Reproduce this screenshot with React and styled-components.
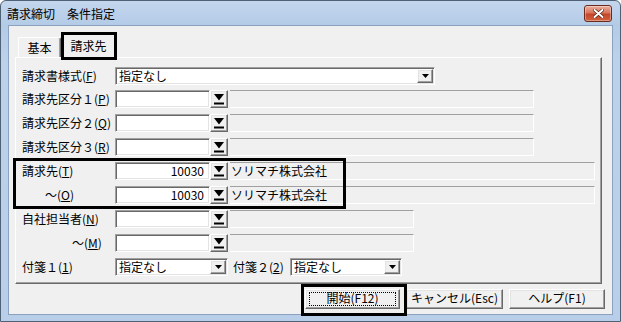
import React from 'react';
import styled, { createGlobalStyle } from 'styled-components';

const Global = createGlobalStyle`
  html, body { margin: 0; padding: 0; background: #fff; }
  body {
    font-family: "Noto Sans CJK JP", "Noto Sans", sans-serif;
    font-size: 12px;
    color: #000;
  }
`;

const Window = styled.div`
  position: relative;
  width: 621px;
  height: 322px;
  box-sizing: border-box;
  border: 1px solid #4f6275;
  border-radius: 6px 6px 0 0;
  background: linear-gradient(to bottom, #c3d6ed 0px, #b4cbe7 24px, #bcd1ea 60px, #b9cfe9 100%);
  display: flex;
  flex-direction: column;
  overflow: hidden;
`;

const TitleBar = styled.div`
  height: 24px;
  flex: none;
  display: flex;
  justify-content: space-between;
  align-items: flex-start;
  padding-left: 6px;
`;

const TitleText = styled.div`
  line-height: 14px;
  margin-top: 6px;
  font-size: 12px;
`;

const CloseBtn = styled.div`
  box-sizing: border-box;
  width: 28px;
  height: 17px;
  margin-top: 4px;
  margin-right: 8px;
  border: 1px solid #6b2a1c;
  border-radius: 3px;
  background: linear-gradient(to bottom, #eab0a0 0%, #d8745c 45%, #c4452a 55%, #d0623f 100%);
  box-shadow: inset 0 0 0 1px rgba(255, 255, 255, 0.35);
  display: flex;
  align-items: center;
  justify-content: center;
`;

const Client = styled.div`
  flex: 1;
  margin: 0 7px 6px 7px;
  box-sizing: border-box;
  border: 1px solid #8ba2bf;
  background: #f0f0f0;
  display: flex;
  flex-direction: column;
`;

const TabStrip = styled.div`
  display: flex;
  align-items: flex-end;
  height: 24px;
  margin-top: 7px;
  padding-left: 9px;
  position: relative;
  z-index: 1;
`;

const Tab = styled.div`
  box-sizing: border-box;
  width: ${p => (p.$active ? 55 : 43)}px;
  height: ${p => (p.$active ? 25 : 20)}px;
  margin-bottom: ${p => (p.$active ? -1 : 0)}px;
  background: #f0f0f0;
  border-top: 1px solid #fff;
  border-left: 1px solid #fff;
  border-right: 1px solid #696969;
  box-shadow: inset -1px 0 0 #a0a0a0;
  border-radius: 2px 2px 0 0;
  display: flex;
  align-items: center;
  justify-content: center;
  line-height: 14px;
  padding-top: ${p => (p.$active ? 0 : 1)}px;
`;

const Panel = styled.div`
  box-sizing: border-box;
  width: 587px;
  height: 227px;
  margin-left: 6px;
  border-top: 1px solid #fff;
  border-left: 1px solid #fff;
  border-right: 1px solid #696969;
  border-bottom: 1px solid #696969;
  box-shadow: inset -1px -1px 0 #a0a0a0;
  padding: 9px 0 0 6px;
  display: flex;
  flex-direction: column;
  gap: 6px;
`;

const Row = styled.div`
  display: flex;
  align-items: center;
  height: 18px;
  margin-bottom: ${p => (p.$tight ? -1 : 0)}px;
`;

const Label = styled.div`
  box-sizing: border-box;
  width: ${p => p.$w || 93}px;
  padding-left: ${p => p.$indent || 0}px;
  margin-left: ${p => p.$ml || 0}px;
  white-space: nowrap;
  line-height: 14px;
  flex: none;
`;

const Sunken = styled.div`
  box-sizing: border-box;
  width: ${p => p.$w}px;
  height: 18px;
  flex: none;
  background: #fff;
  border-top: 1px solid #a0a0a0;
  border-left: 1px solid #a0a0a0;
  border-right: 1px solid #fff;
  border-bottom: 1px solid #fff;
  box-shadow: inset 1px 1px 0 #696969, inset -1px -1px 0 #e3e3e3;
  display: flex;
  align-items: center;
  line-height: 14px;
  white-space: nowrap;
`;

const Field = styled(Sunken)`
  justify-content: ${p => (p.$right ? 'flex-end' : 'flex-start')};
  padding: 0 5px 0 3px;
`;

const Combo = styled(Sunken)`
  justify-content: space-between;
  padding: 0 1px 0 3px;
`;

const raised = `
  background: #f0f0f0;
  border: 1px solid;
  border-color: #fff #696969 #696969 #fff;
  box-shadow: inset -1px -1px 0 #a0a0a0, inset 1px 1px 0 #e3e3e3;
`;

const ComboArrow = styled.div`
  box-sizing: border-box;
  width: 16px;
  height: 14px;
  ${raised}
  display: flex;
  align-items: center;
  justify-content: center;
`;

const LookupBtn = styled.div`
  box-sizing: border-box;
  width: 18px;
  height: 18px;
  flex: none;
  ${raised}
  display: flex;
  align-items: center;
  justify-content: center;
`;

const Display = styled.div`
  box-sizing: border-box;
  width: ${p => p.$w}px;
  height: 18px;
  margin-left: 2px;
  flex: none;
  background: #f0f0f0;
  border-top: 1px solid #a0a0a0;
  border-right: 1px solid #fff;
  border-bottom: 1px solid #fff;
  padding-left: 1px;
  display: flex;
  align-items: center;
  line-height: 14px;
  white-space: nowrap;
`;

const ButtonBar = styled.div`
  display: flex;
  justify-content: flex-end;
  gap: 6px;
  margin-top: 5px;
  padding-right: 7px;
`;

const Button = styled.div`
  box-sizing: border-box;
  width: ${p => p.$w}px;
  height: 20px;
  ${raised}
  position: relative;
  display: flex;
  align-items: center;
  justify-content: center;
  line-height: 12px;
  padding-bottom: 2px;
  white-space: nowrap;
`;

const FocusRing = styled.div`
  position: absolute;
  inset: 2px 3px;
  border: 1px dotted #000;
`;

const Highlight = styled.div`
  position: absolute;
  box-sizing: border-box;
  border: 3px solid #000;
  pointer-events: none;
  z-index: 5;
`;

const LookupIcon = () => (
  <svg width="10" height="11" viewBox="0 0 10 11">
    <polygon points="0,0 10,0 5,6.5" fill="#000" />
    <rect x="0" y="8.5" width="10" height="2" fill="#000" />
  </svg>
);

const ArrowIcon = () => (
  <svg width="7" height="4" viewBox="0 0 7 4">
    <polygon points="0,0 7,0 3.5,4" fill="#000" />
  </svg>
);

const CloseIcon = () => (
  <svg width="11" height="9" viewBox="0 0 11 9">
    <path d="M1.5 1 L9.5 8 M9.5 1 L1.5 8" stroke="#4a1a10" strokeWidth="3.2" strokeLinecap="round" />
    <path d="M1.5 1 L9.5 8 M9.5 1 L1.5 8" stroke="#fff" strokeWidth="2" strokeLinecap="round" />
  </svg>
);

const LookupRow = ({ label, indent, value, display, dw }) => (
  <Row>
    <Label $indent={indent}>{label}</Label>
    <Field $w={95} $right>{value}</Field>
    <LookupBtn><LookupIcon /></LookupBtn>
    <Display $w={dw}>{display}</Display>
  </Row>
);

export default function App() {
  return (
    <>
      <Global />
      <Window>
        <TitleBar>
          <TitleText>請求締切　条件指定</TitleText>
          <CloseBtn><CloseIcon /></CloseBtn>
        </TitleBar>
        <Client>
          <TabStrip>
            <Tab>基本</Tab>
            <Tab $active>請求先</Tab>
          </TabStrip>
          <Panel>
            <Row $tight>
              <Label>請求書様式(<u>F</u>)</Label>
              <Combo $w={320}>
                <span>指定なし</span>
                <ComboArrow><ArrowIcon /></ComboArrow>
              </Combo>
            </Row>
            <LookupRow label={<>請求先区分１(<u>P</u>)</>} dw={304} />
            <LookupRow label={<>請求先区分２(<u>Q</u>)</>} dw={304} />
            <LookupRow label={<>請求先区分３(<u>R</u>)</>} dw={304} />
            <LookupRow label={<>請求先(<u>T</u>)</>} value="10030" display="ソリマチ株式会社" dw={365} />
            <LookupRow label={<>～(<u>O</u>)</>} indent={23} value="10030" display="ソリマチ株式会社" dw={365} />
            <LookupRow label={<>自社担当者(<u>N</u>)</>} dw={184} />
            <LookupRow label={<>～(<u>M</u>)</>} indent={50} dw={184} />
            <Row>
              <Label>付箋１(<u>1</u>)</Label>
              <Combo $w={113}>
                <span>指定なし</span>
                <ComboArrow><ArrowIcon /></ComboArrow>
              </Combo>
              <Label $w={57} $ml={5}>付箋２(<u>2</u>)</Label>
              <Combo $w={112}>
                <span>指定なし</span>
                <ComboArrow><ArrowIcon /></ComboArrow>
              </Combo>
            </Row>
          </Panel>
          <ButtonBar>
            <Button $w={95}>開始(F12)<FocusRing /></Button>
            <Button $w={97}>キャンセル(Esc)</Button>
            <Button $w={96}>ヘルプ(F1)</Button>
          </ButtonBar>
        </Client>
        <Highlight style={{ left: 60, top: 31, width: 56, height: 28 }} />
        <Highlight style={{ left: 12, top: 157, width: 333, height: 51 }} />
        <Highlight style={{ left: 300, top: 283, width: 106, height: 32 }} />
      </Window>
    </>
  );
}
